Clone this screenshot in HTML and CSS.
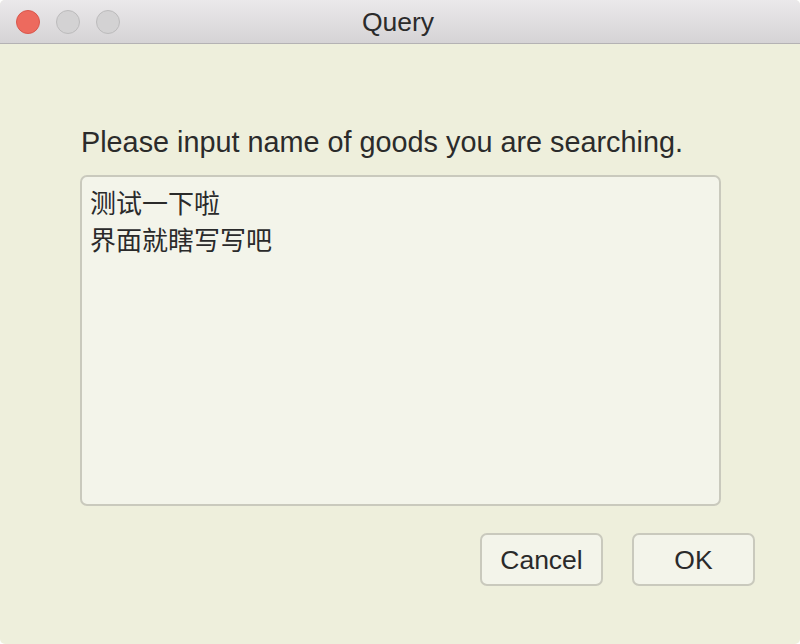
FILE: index.html
```html
<!DOCTYPE html>
<html lang="en">
<head>
<meta charset="utf-8">
<title>Query</title>
<link rel="stylesheet" href="styles.css">
</head>
<body>
<div class="window">
  <div class="titlebar">
    <div class="lights">
      <span class="light close"></span>
      <span class="light min"></span>
      <span class="light max"></span>
    </div>
    <div class="title">Query</div>
  </div>
  <div class="content">
    <div class="label">Please input name of goods you are searching.</div>
    <div class="textbox">测试一下啦<br>界面就瞎写写吧</div>
    <div class="buttons">
      <button class="btn">Cancel</button>
      <button class="btn">OK</button>
    </div>
  </div>
</div>
</body>
</html>
```

FILE: styles.css
```css
* { box-sizing: border-box; }
html, body { margin: 0; padding: 0; background: #ffffff; }
body { width: 800px; height: 644px; overflow: hidden; }
.window {
  width: 800px; height: 644px;
  background: #eeefdc;
  border-radius: 5px;
  overflow: hidden;
  display: flex; flex-direction: column;
  font-family: "Liberation Sans", "Noto Sans CJK SC", sans-serif;
  color: #2a2a2a;
}
.titlebar {
  height: 44px; flex: none;
  position: relative;
  background: linear-gradient(#ebe9eb, #d5d3d5);
  border-bottom: 1px solid #b4b2b4;
  display: flex; align-items: center; justify-content: center;
}
.lights {
  position: absolute; left: 16px; top: 10px;
  display: flex; gap: 16px;
}
.light {
  width: 24px; height: 24px; border-radius: 50%;
  background: #d3d2d3; border: 1px solid #bcbbbc;
}
.light.close { background: #ed6a5e; border-color: #d9574c; }
.title { font-size: 26.5px; color: #2b2b2b; margin-left: -4px; margin-top: 2px; }
.content {
  padding: 82px 45px 0 80px;
  display: flex; flex-direction: column;
}
.label { font-size: 28.8px; line-height: 32px; margin-left: 1px; color: #2b2b2b; white-space: nowrap; }
.textbox {
  margin-top: 17px;
  margin-right: 34px;
  height: 331px;
  background: #f3f4ea;
  border: 2px solid #c9c9bd;
  border-radius: 7px;
  padding: 6px 8px;
  font-family: "Noto Sans CJK SC", sans-serif;
  font-size: 26px; line-height: 37px;
  color: #2a2a2a;
}
.buttons {
  margin-top: 27px;
  display: flex; justify-content: flex-end; gap: 29px;
}
.btn {
  height: 53px;
  width: 123px;
  background: #f3f4ea;
  border: 2px solid #c9c9bd;
  border-radius: 7px;
  font-family: "Liberation Sans", sans-serif;
  font-size: 26.5px; color: #2a2a2a;
  padding: 2px 0 0;
}
```
